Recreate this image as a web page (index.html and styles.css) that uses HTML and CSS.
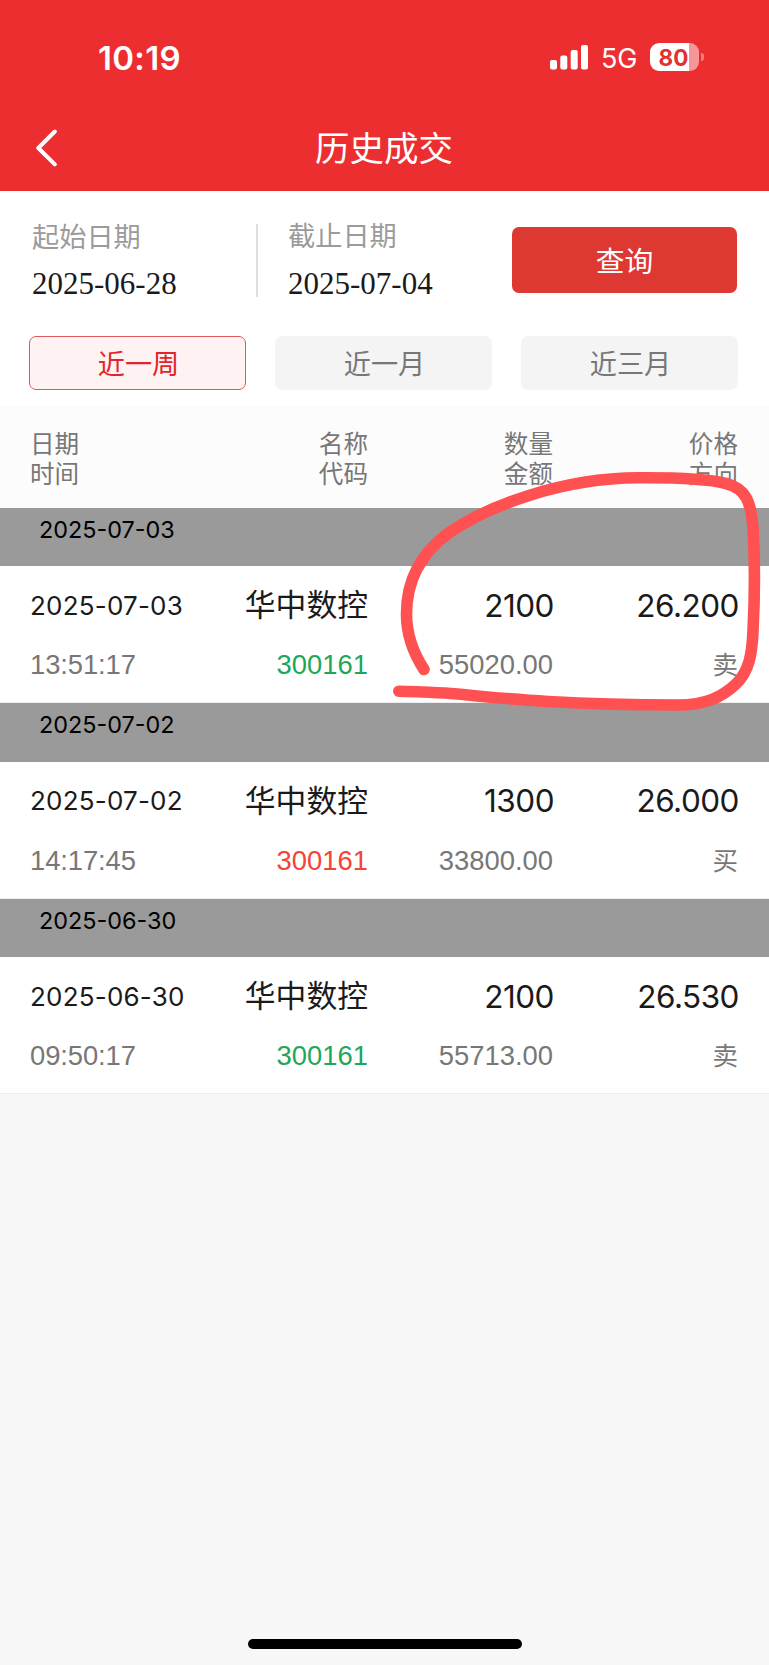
FILE: index.html
```
<!DOCTYPE html>
<html lang="zh-CN">
<head>
    <meta charset="UTF-8">
    <meta name="viewport" content="width=device-width, initial-scale=1.0">
    <title>历史成交</title>
    <link rel="stylesheet" href="styles.css">
</head>
<body>
    <header class="header">
        <div class="status-bar">
            <div class="time">10:19</div>
            <div class="status-icons">
                <svg class="signal" width="38" height="25" viewBox="0 0 38 25" fill="#fff">
                    <rect x="0" y="15" width="7" height="9.5" rx="2"/>
                    <rect x="10.3" y="10.5" width="7" height="14" rx="2"/>
                    <rect x="20.7" y="5" width="7" height="19.5" rx="2"/>
                    <rect x="31" y="0" width="7" height="24.5" rx="2"/>
                </svg>
                <span class="network">5G</span>
                <div class="battery">
                    <div class="battery-body">80</div>
                    <div class="battery-cap"></div>
                </div>
            </div>
        </div>
        <div class="title-bar">
            <svg class="back" width="22" height="38" viewBox="0 0 22 38" fill="none" stroke="#fff" stroke-width="4" stroke-linecap="round" stroke-linejoin="round">
                <path d="M18.800 2.500 2.300 19l16.500 16.300"/>
            </svg>
            <h1>历史成交</h1>
        </div>
    </header>

    <section class="filter">
        <div class="dates">
            <div class="date-field start">
                <label>起始日期</label>
                <span>2025-06-28</span>
            </div>
            <div class="date-field end">
                <label>截止日期</label>
                <span>2025-07-04</span>
            </div>
            <button class="query">查询</button>
        </div>
        <div class="tabs">
            <button class="tab active">近一周</button>
            <button class="tab">近一月</button>
            <button class="tab">近三月</button>
        </div>
    </section>

    <main class="records">
        <div class="table-head">
            <div>日期<br>时间</div>
            <div>名称<br>代码</div>
            <div>数量<br>金额</div>
            <div>价格<br>方向</div>
        </div>

        <div class="group">2025-07-03</div>
        <div class="record sell">
            <div class="date">2025-07-03</div>
            <div class="name">华中数控</div>
            <div class="num">2100</div>
            <div class="num">26.200</div>
            <div class="sub clock">13:51:17</div>
            <div class="sub code">300161</div>
            <div class="sub">55020.00</div>
            <div class="sub side">卖</div>
        </div>

        <div class="group">2025-07-02</div>
        <div class="record buy">
            <div class="date">2025-07-02</div>
            <div class="name">华中数控</div>
            <div class="num">1300</div>
            <div class="num">26.000</div>
            <div class="sub clock">14:17:45</div>
            <div class="sub code">300161</div>
            <div class="sub">33800.00</div>
            <div class="sub side">买</div>
        </div>

        <div class="group">2025-06-30</div>
        <div class="record sell">
            <div class="date">2025-06-30</div>
            <div class="name">华中数控</div>
            <div class="num">2100</div>
            <div class="num">26.530</div>
            <div class="sub clock">09:50:17</div>
            <div class="sub code">300161</div>
            <div class="sub">55713.00</div>
            <div class="sub side">卖</div>
        </div>

        <!-- hand-drawn mark over the first record -->
        <svg class="mark" width="369" height="246" viewBox="392 468 369 246" fill="none">
            <path d="M424 669.500C412 651 406.500 632 406.500 614C406.500 577 423 552 448 533.500C487 506 562 478 638 477.800C668 477.600 708 479 726 483.500C746 488.500 751 502 753 528C754.500 552 754.800 596 753 631C752 655 749 671 736 684C722 697 706 705 678 705C640 705 590 704 548 701.500C505 699 480 696 445 693C425 692 410 691.300 398.800 691.200"/>
        </svg>
    </main>

    <div class="home-bar"></div>
</body>
</html>
```
FILE: styles.css
```
* {
    box-sizing: border-box;
}
body {
    margin: 0;
    height: 1665px;
    display: flex;
    flex-direction: column;
    background-color: #f7f7f7;
    font-family: Inter, "Noto Sans CJK SC", sans-serif;
    color: #1a1a1a;
}
button {
    padding: 0;
    border: none;
    font-family: inherit;
    cursor: pointer;
}

/* header */
.header {
    height: 191px;
    background-color: #ed2e31;
    color: #fff;
}
.status-bar {
    height: 105px;
    padding: 9px 65px 0 98px;
    display: flex;
    justify-content: space-between;
    align-items: center;
}
.time {
    padding-top: 1px;
    font-size: 33px;
    font-weight: 600;
    letter-spacing: 0.3px;
}
.status-icons {
    display: flex;
    align-items: center;
}
.network {
    margin: 2px 13px 0 13px;
    font-size: 27px;
    letter-spacing: -0.3px;
}
.battery {
    display: flex;
    align-items: center;
    gap: 2px;
}
.battery-body {
    width: 49px;
    height: 28px;
    padding-right: 2px;
    border-radius: 9px;
    background: linear-gradient(to right, #fff 80%, #f79698 80%);
    color: #e0302f;
    font-size: 22.5px;
    font-weight: 700;
    line-height: 29px;
    text-align: center;
}
.battery-cap {
    width: 3px;
    height: 8px;
    border-radius: 0 3px 3px 0;
    background-color: #f38183;
}
.title-bar {
    height: 86px;
    padding: 0 37px 0 36px;
    display: grid;
    grid-template-columns: 22px 1fr 22px;
    align-items: center;
}
.title-bar h1 {
    margin: 0;
    padding-top: 2px;
    font-size: 34.5px;
    font-weight: 400;
    line-height: 50px;
    text-align: center;
}

/* filter */
.filter {
    height: 215px;
    padding: 33px 31px 0 29px;
    background-color: #fff;
}
.dates {
    display: flex;
    height: 73px;
    margin-bottom: 39px;
}
.date-field {
    display: flex;
    flex-direction: column;
    justify-content: space-between;
}
.date-field label {
    padding-top: 1px;
    font-size: 27.2px;
    line-height: 26px;
    color: #9b9b9b;
}
.date-field span {
    font-family: "Liberation Serif", serif;
    font-size: 31px;
    line-height: 26px;
}
.start {
    width: 229px;
    padding-left: 3px;
    border-right: 2px solid #ddd;
}
.end {
    width: 254px;
    padding-left: 30px;
}
.end label {
    margin-top: -1px;
}
.query {
    width: 225px;
    height: 66px;
    margin-top: 3px;
    padding-bottom: 2px;
    border-radius: 7px;
    background-color: #dd3831;
    color: #fff;
    font-size: 28.8px;
}
.tabs {
    display: grid;
    grid-template-columns: repeat(3, 1fr);
    gap: 29px;
}
.tab {
    height: 54px;
    padding: 0 0 2px 2px;
    border-radius: 7px;
    background-color: #f4f4f4;
    color: #777;
    font-size: 27.2px;
}
.tab.active {
    border: 1px solid #dc5a5e;
    background-color: #fff2f2;
    color: #e0252b;
}

/* records */
.records {
    position: relative;
}
.table-head,
.record {
    display: grid;
    grid-template-columns: 174px 164px 185px 185px;
    padding: 0 30px;
    text-align: right;
}
.table-head > :first-child,
.record .date,
.record .clock {
    text-align: left;
}
.table-head {
    height: 101.5px;
    padding-top: 23px;
    background-color: #fcfcfc;
    color: #777;
    font-size: 24.6px;
    line-height: 30px;
}
.group {
    height: 58.6px;
    padding: 8px 39px;
    background-color: #9a9a9a;
    color: #000;
    font-size: 23.4px;
    line-height: 28px;
}
.record {
    height: 137px;
    padding-top: 9px;
    grid-template-rows: 60px 60px;
    align-items: center;
    background-color: #fff;
    border-bottom: 1px solid #eee;
}
.date {
    font-size: 26px;
    letter-spacing: 0.2px;
}
.name {
    font-size: 30.8px;
    line-height: 40px;
}
.num {
    margin-right: -1px;
    font-size: 31.5px;
    letter-spacing: -0.5px;
}
.sub {
    font-family: "Liberation Sans", "Noto Sans CJK SC", sans-serif;
    font-size: 27.4px;
    line-height: 36px;
    color: #777;
}
.side {
    font-size: 25.5px;
}
.clock {
    letter-spacing: -0.1px;
}
.sell .code {
    color: #1ea75a;
}
.buy .code {
    color: #f54336;
}
.mark {
    position: absolute;
    left: 392px;
    top: 62px;
}
.mark path {
    stroke: #ff5152;
    stroke-width: 11.6;
    stroke-linecap: round;
    stroke-linejoin: round;
}

.home-bar {
    width: 274px;
    height: 10px;
    margin: auto auto 16px;
    border-radius: 5px;
    background-color: #000;
}
```
